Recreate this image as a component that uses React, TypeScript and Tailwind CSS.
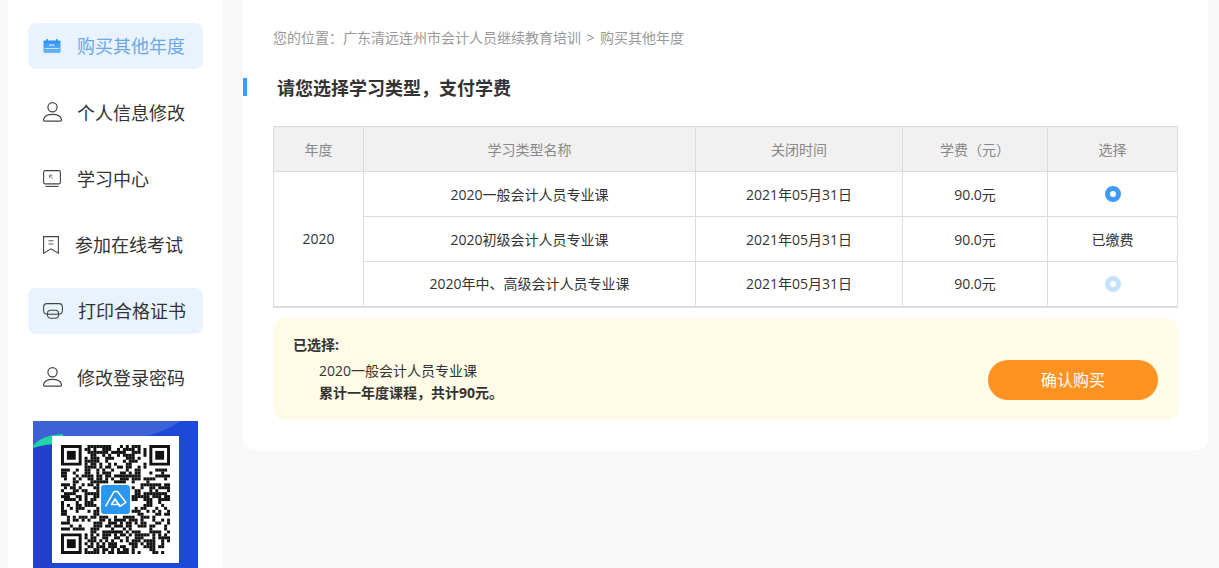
import React from "react";

const font = { fontFamily: '"Open Sans", "Noto Sans CJK SC", sans-serif' };

function IconCalendar() {
  return (
    <svg width="18" height="14" viewBox="0 0 18 14">
      <defs>
        <linearGradient id="g" x1="0" y1="0" x2="0" y2="1">
          <stop offset="0" stopColor="#2f8ff0" />
          <stop offset="1" stopColor="#6cb8f8" />
        </linearGradient>
      </defs>
      <rect x="0.5" y="1.500" width="17" height="12.500" rx="0.800" fill="url(#g)" />
      <rect x="3.500" y="0" width="1.500" height="3" fill="#2f8ff0" />
      <rect x="13" y="0" width="1.500" height="3" fill="#2f8ff0" />
      <rect x="6" y="5.500" width="5.500" height="1.100" fill="#e8f3fe" />
      <rect x="2" y="9" width="14" height="0.900" fill="#d4e9fd" />
    </svg>
  );
}
function IconUser() {
  return (
    <svg width="19" height="20" viewBox="1.100 0.700 17.800 18.600" fill="none" stroke="#444" strokeWidth="1.150">
      <circle cx="10" cy="5.600" r="4.300" />
      <path d="M3 18.600c-1.400 0-1.600-1-1.200-2.200C2.700 13.500 5.800 12.300 10 12.300s7.300 1.200 8.200 4.100c.4 1.200.2 2.200-1.200 2.200z" />
    </svg>
  );
}
function IconScreen() {
  return (
    <svg width="18" height="17" viewBox="0 0 18 17" fill="none" stroke="#444" strokeWidth="1.100">
      <rect x="0.600" y="0.600" width="16.800" height="13.300" rx="1.500" />
      <path d="M2.500 16.400h13" />
      <path d="M6.500 5.200h3M6.500 5.200v3M6.700 5.400l3.300 3.300" strokeWidth="0.900" stroke="#666" />
    </svg>
  );
}
function IconBookmark() {
  return (
    <svg width="16" height="18" viewBox="0 0 16 18" fill="none" stroke="#444" strokeWidth="1.100">
      <path d="M.6.600h14.800v16.600L8 12.800.6 17.200z" />
      <path d="M5.500 4.800h5M5.500 8h5" strokeWidth="0.900" />
    </svg>
  );
}
function IconPrint() {
  return (
    <svg width="20" height="16" viewBox="0 0 20 16" fill="none" stroke="#444" strokeWidth="1.100">
      <path d="M4 11.200C1.900 10.800.6 9.300.6 7.400V4C.6 2 2 .6 4 .6h12c2 0 3.400 1.400 3.400 3.400v3.400c0 1.900-1.300 3.400-3.400 3.800" />
      <rect x="4.500" y="7.300" width="11" height="8" rx="3.200" />
      <path d="M4.500 11.200h11" />
    </svg>
  );
}

const menu = [
  { t: "购买其他年度", icon: <IconCalendar />, on: true, cls: "text-[#6ba7ea]", gap: "gap-[16px]", tw: "" },
  { t: "个人信息修改", icon: <IconUser />, cls: "text-[#333]", gap: "gap-[15px]", tw: "pt-[2px]" },
  { t: "学习中心", icon: <IconScreen />, cls: "text-[#333]", gap: "gap-[16px]", tw: "pt-[2px]" },
  { t: "参加在线考试", icon: <IconBookmark />, cls: "text-[#333]", gap: "gap-[16px]", tw: "pt-[2px]" },
  { t: "打印合格证书", icon: <IconPrint />, on: true, cls: "text-[#333]", gap: "gap-[15px]", tw: "pt-[2px]" },
  { t: "修改登录密码", icon: <IconUser />, cls: "text-[#333]", gap: "gap-[15px]", tw: "pt-[4px]" },
];

function QR() {
  const n = 37;
  const cells: React.ReactNode[] = [];
  let s = 12345;
  const rnd = () => {
    s = (s * 1103515245 + 12345) & 0x7fffffff;
    return (s >> 12) % 100;
  };
  const inFinder = (x: number, y: number) =>
    (x < 8 && y < 8) || (x >= n - 8 && y < 8) || (x < 8 && y >= n - 8);
  for (let y = 0; y < n; y++) {
    for (let x = 0; x < n; x++) {
      if (inFinder(x, y)) continue;
      if (x >= 13 && x <= 23 && y >= 13 && y <= 23) continue;
      if (rnd() < 52) cells.push(<rect key={x + "-" + y} x={x} y={y} width="1.020" height="1.020" />);
    }
  }
  const finder = (x: number, y: number) => (
    <g key={x + "_" + y}>
      <path d={`M${x} ${y}h7v7h-7z M${x + 1} ${y + 1}v5h5v-5z`} fillRule="evenodd" />
      <rect x={x + 2} y={y + 2} width="3" height="3" />
    </g>
  );
  return (
    <svg viewBox="0 0 37 37" width="109" height="109" fill="#111">
      {cells}
      {finder(0, 0)}
      {finder(30, 0)}
      {finder(0, 30)}
      <svg x="13.600" y="13.600" width="9.800" height="9.800" viewBox="0 0 29 29">
        <rect width="29" height="29" rx="3" fill="#2a96ee" />
        <path d="M4.500 21.500 13 6.500h3.500L25 17.500l-6 4-5-7.500-3.500 5.500H19" fill="none" stroke="#fff" strokeWidth="1.500" strokeLinejoin="round" />
      </svg>
    </svg>
  );
}

function PosterBg() {
  return (
    <svg className="absolute inset-0" width="165" height="170" viewBox="0 0 165 170">
      <rect width="165" height="170" fill="#1c4ad6" />
      <path d="M0 0H148Q130 12 105 17V30H0Z" fill="#3d62d6" />
      <rect y="24" width="20" height="146" fill="#2240cc" />
      <path d="M0 25Q8 14 30 13V22Q12 23 0 27Z" fill="#1fd6a4" />
    </svg>
  );
}

const th = "border border-[#dcdcdc] bg-[#f1f1f1] font-normal text-[#888] text-[14px] h-[45px] p-0";
const td = "border border-[#dcdcdc] text-[#333] text-[14px] h-[45px] p-0 text-center";

const Radio = ({ light }: { light?: boolean }) => (
  <span className={`block mx-auto w-4 h-4 rounded-full border-[5px] bg-white ${light ? "border-[#c6e1fc]" : "border-[#3f9bf5]"}`} />
);

const rows = [
  { n: "2020一般会计人员专业课", c: <Radio /> },
  { n: "2020初级会计人员专业课", c: "已缴费" },
  { n: "2020年中、高级会计人员专业课", c: <Radio light /> },
];

export default function App() {
  return (
    <div className="h-[568px] overflow-hidden bg-[#f8f8f8] flex items-start pl-2" style={font}>
      <aside className="w-[215px] h-[568px] shrink-0 bg-white pt-[23px] pl-5 overflow-hidden">
        <div className="flex flex-col gap-[20.200px] w-[175px]">
          {menu.map((m) => (
            <div key={m.t} className={`h-[46px] shrink-0 rounded-lg flex items-center pl-[15px] text-[18px] ${m.gap} ${m.cls} ${m.on ? "bg-[#e8f3fe]" : ""}`}>
              <span className="shrink-0 flex">{m.icon}</span>
              <span className={`whitespace-nowrap ${m.tw}`}>{m.t}</span>
            </div>
          ))}
        </div>
        <div className="relative ml-[5px] mt-[21px] w-[165px] h-[170px] overflow-hidden">
          <PosterBg />
          <div className="absolute left-[19px] top-[15px] w-[127px] h-[127px] bg-white flex items-center justify-center">
            <QR />
          </div>
        </div>
      </aside>
      <main className="ml-5 w-[965px] h-[450px] bg-white rounded-b-xl px-[30px] shrink-0">
        <div className="pt-[28px] text-[14px] leading-[20px] text-[#999] whitespace-nowrap">
          您的位置：广东清远连州市会计人员继续教育培训<span className="mx-[5.500px]">&gt;</span>购买其他年度
        </div>
        <div className="relative mt-[30px] h-[20px] flex items-center">
          <span className="absolute -left-[30px] top-0 w-[4px] h-[18px] bg-[#3f9bf5]" />
          <h1 className="pl-1 text-[18px] font-bold text-[#333] whitespace-nowrap">请您选择学习类型，支付学费</h1>
        </div>
        <table className="mt-[28px] w-[905px] table-fixed border-collapse border-b-2 border-[#dcdcdc]">
          <colgroup>
            <col className="w-[90px]" />
            <col className="w-[332px]" />
            <col className="w-[207px]" />
            <col className="w-[145px]" />
            <col />
          </colgroup>
          <thead>
            <tr>
              <th className={th}>年度</th>
              <th className={th}>学习类型名称</th>
              <th className={th}>关闭时间</th>
              <th className={th}>学费（元）</th>
              <th className={th}>选择</th>
            </tr>
          </thead>
          <tbody>
            {rows.map((r, i) => (
              <tr key={r.n}>
                {i === 0 && <td rowSpan={3} className={td}>2020</td>}
                <td className={td}>{r.n}</td>
                <td className={td}>2021年05月31日</td>
                <td className={td}>90.0元</td>
                <td className={td}>{r.c}</td>
              </tr>
            ))}
          </tbody>
        </table>
        <div className="mt-[10px] h-[102px] w-[905px] rounded-xl bg-[#fffbe6] flex items-start justify-between pl-5 pr-5 pt-[17px]">
          <div className="text-[14px] text-[#333]">
            <div className="font-bold leading-[20px] mb-[5px]">已选择:</div>
            <div className="pl-[26px] leading-[22px]">2020一般会计人员专业课</div>
            <div className="pl-[26px] leading-[22px] font-bold">累计一年度课程，共计90元。</div>
          </div>
          <button className="mt-[25px] w-[170px] h-10 rounded-full bg-[#ff9322] text-white text-[16px]">确认购买</button>
        </div>
      </main>
    </div>
  );
}
